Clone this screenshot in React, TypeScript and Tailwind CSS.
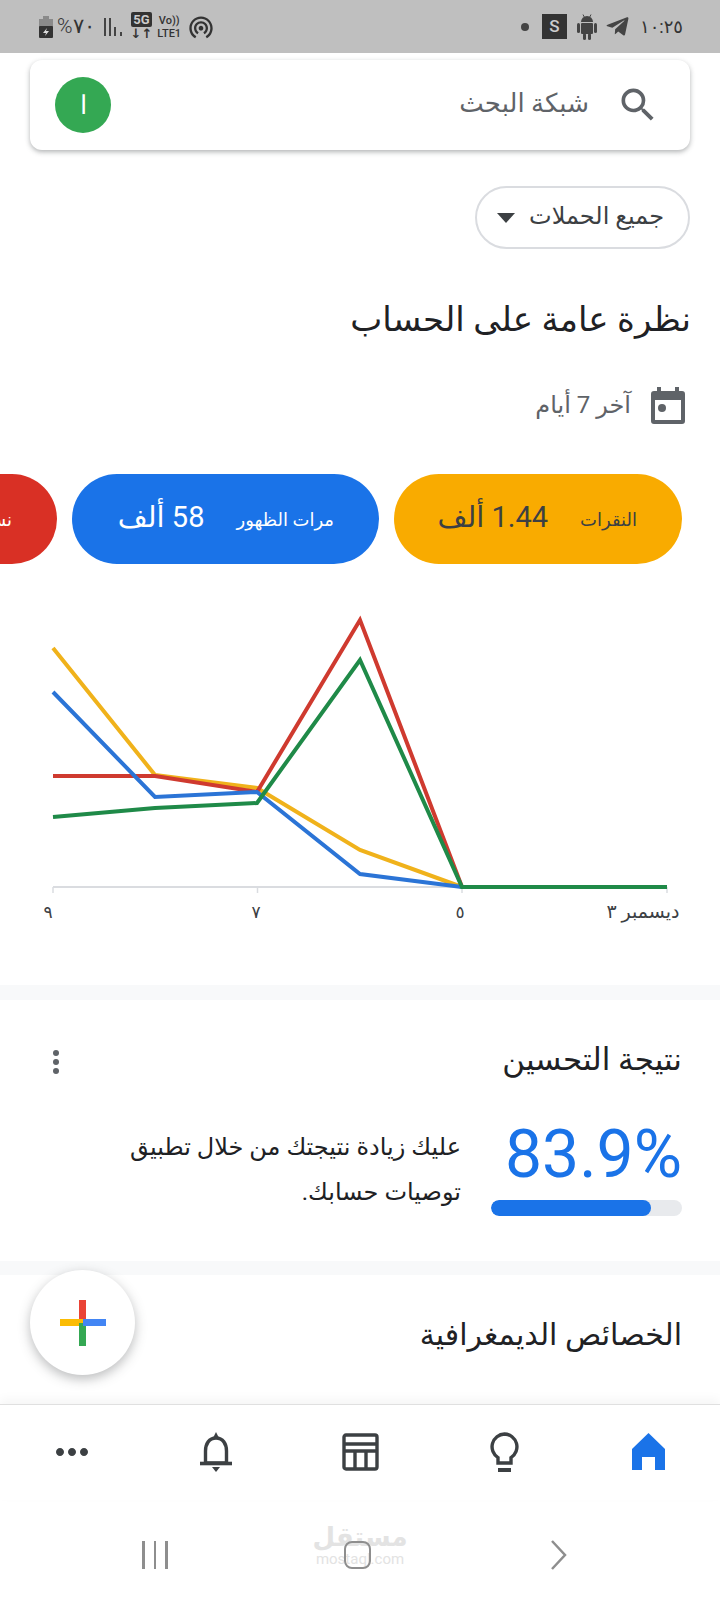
import React from 'react';
import { FaTelegramPlane } from 'react-icons/fa';
import { MdSearch, MdMoreHoriz, MdWifiTethering } from 'react-icons/md';

const FONT = "font-['Roboto','DejaVu_Sans',sans-serif]";

const SERIES = [
  { color: '#f0b21b', pts: '53,648 155,775 257,788 360,850 462,887' },
  { color: '#cf3a2f', pts: '53,776 155,776 257,792 360,620 462,887' },
  { color: '#2b74d6', pts: '53,692 155,797 257,792 360,874 462,887' },
  { color: '#1f8a48', pts: '53,817 155,808 257,803 360,660 462,887 667,887' },
];

const AndroidIcon = () => (
  <svg width="20" height="26" viewBox="0 0 20 26" fill="#444" className="ml-[10px]">
    <path d="M4 8 A6 6 0 0 1 16 8 Z" />
    <path d="M6 0.5 L7.5 3.5 M14 0.5 L12.5 3.5" stroke="#444" strokeWidth="1" />
    <rect x="4" y="9" width="12" height="11" rx="1" />
    <rect x="0" y="9" width="3" height="10" rx="1.5" />
    <rect x="17" y="9" width="3" height="10" rx="1.5" />
    <rect x="6" y="19" width="3" height="7" rx="1.5" />
    <rect x="11" y="19" width="3" height="7" rx="1.5" />
  </svg>
);

const StatusBar = () => (
  <div dir="ltr" className="h-[53px] shrink-0 bg-[#bfbfbf] flex items-center justify-between pl-[38px] pr-[40px] text-[#333]">
    <div className="flex items-center">
      <svg width="16" height="24" viewBox="0 0 16 24" className="mr-[3px]">
        <rect x="5" y="1" width="6" height="4" fill="#8a8a8a" />
        <rect x="1" y="4" width="14" height="8" fill="#8a8a8a" />
        <rect x="1" y="11" width="14" height="12" rx="1" fill="#333" />
        <path d="M9 13 L5 18 H8 L7 21 L11 16 H8 Z" fill="#ddd" />
      </svg>
      <span className="text-[21px] leading-none font-light">%٧٠</span>
      <svg width="20" height="18" viewBox="0 0 20 18" className="ml-[9px]">
        <rect x="0" y="0" width="2" height="18" fill="#444" />
        <rect x="5" y="0" width="2" height="18" fill="#444" />
        <rect x="10" y="9" width="2" height="9" fill="#444" />
        <rect x="16" y="14" width="2" height="4" fill="#444" />
      </svg>
      <div className="ml-[7px] flex flex-col items-center">
        <span className="bg-[#333] text-[#ccc] text-[13px] leading-[15px] font-bold px-[2px] rounded-[2px]">5G</span>
        <span className="text-[13px] leading-[14px] font-bold">↓↑</span>
      </div>
      <div className="ml-[5px] flex flex-col items-center text-[11px] leading-[13px] font-medium">
        <span>Vo))</span>
        <span>LTE1</span>
      </div>
      <MdWifiTethering className="ml-[6px] w-[28px] h-[28px]" />
    </div>
    <div className="flex items-center">
      <span className="w-[8px] h-[8px] rounded-full bg-[#444]" />
      <span className="ml-[13px] w-[25px] h-[25px] bg-[#333] text-[#ccc] flex items-center justify-center text-[17px] font-medium">S</span>
      <AndroidIcon />
      <FaTelegramPlane className="ml-[8px] w-[25px] h-[25px] text-[#444]" />
      <span className="ml-[10px] w-[40px] text-[18px] leading-none">١٠:٢٥</span>
    </div>
  </div>
);

const Pill = ({ label, value, bg, labelCls, valueCls, width }: { label: string; value: string; bg: string; labelCls: string; valueCls: string; width: string }) => (
  <div className={`${bg} ${width} h-[90px] shrink-0 rounded-full flex items-center pr-[45px] gap-[32px]`}>
    <span className={`text-[18px] whitespace-nowrap ${labelCls}`}>{label}</span>
    <span className={`text-[29px] pb-[3px] whitespace-nowrap ${valueCls}`}>{value}</span>
  </div>
);

const Chart = () => (
  <svg width="720" height="421" viewBox="0 564 720 421" className="block shrink-0">
    <line x1="53" y1="887" x2="667" y2="887" stroke="#dadce0" strokeWidth="2" />
    {[53, 257.5, 462, 667].map((x) => (
      <line key={x} x1={x} y1="887" x2={x} y2="893" stroke="#dadce0" strokeWidth="1.5" />
    ))}
    {SERIES.map((s) => (
      <polyline key={s.color} points={s.pts} fill="none" stroke={s.color} strokeWidth="4" strokeLinejoin="miter" />
    ))}
    <g fontSize="17" fill="#3c4043">
      <text x="48" y="918" textAnchor="middle">٩</text>
      <text x="256" y="918" textAnchor="middle">٧</text>
      <text x="460" y="918" textAnchor="middle">٥</text>
      <text x="643" y="918" textAnchor="middle" direction="rtl" fontSize="19">ديسمبر ٣</text>
    </g>
  </svg>
);

const HomeIcon = () => (
  <svg width="33" height="37" viewBox="0 0 33 37">
    <path d="M16.5 0 L33 16 V37 H23 V24 H10 V37 H0 V16 Z" fill="#1a73e8" />
  </svg>
);

const BulbIcon = () => (
  <svg width="29" height="40" viewBox="0 0 29 40" fill="none" stroke="#3c4043" strokeWidth="3.4">
    <path d="M14.5 2 A12.8 12.8 0 0 0 8 25.6 V31 H21 V25.6 A12.8 12.8 0 0 0 14.5 2 Z" />
    <path d="M8 38 H21" strokeWidth="4" />
  </svg>
);

const BellIcon = () => (
  <svg width="32" height="40" viewBox="0 0 32 40" fill="none" stroke="#3c4043" strokeWidth="3.4">
    <path d="M16 6 C9 6 5.5 12 5.5 19 V31 H26.5 V19 C26.5 12 23 6 16 6 Z" />
    <path d="M0 31.5 H32" strokeWidth="3.6" />
    <path d="M16 0 L19 6 H13 Z" fill="#3c4043" stroke="none" />
    <path d="M12 35 H20 L16 40 Z" fill="#3c4043" stroke="none" />
  </svg>
);

const TableIcon = () => (
  <svg width="37" height="38" viewBox="0 0 37 38" fill="none" stroke="#3c4043" strokeWidth="3.4">
    <rect x="2" y="2" width="33" height="34" rx="2" />
    <path d="M2 11 H35 M2 18 H35 M13 18 V36 M24 18 V36" />
  </svg>
);

export default function App() {
  return (
    <div dir="rtl" className={`${FONT} relative w-[720px] h-[1600px] overflow-hidden bg-white flex flex-col text-[#202124]`}>
      <StatusBar />

      <div className="mt-[7px] mx-[30px] h-[90px] shrink-0 rounded-[12px] bg-white shadow-[0_2px_5px_rgba(60,64,67,0.4)] flex items-center pr-[30px] pl-[25px]">
        <MdSearch className="w-[44px] h-[44px] text-[#5f6368]" />
        <span className="mr-[27px] text-[26px] leading-[36px] pb-[4px] text-[#5f6368]">شبكة البحث</span>
        <span className="mr-auto w-[56px] h-[56px] rounded-full bg-[#34a853] text-white flex items-center justify-center text-[26px] font-light">ا</span>
      </div>

      <div className="mt-[36px] mr-[30px] self-start w-[215px] h-[63px] shrink-0 rounded-full border-2 border-[#dadce0] flex items-center pr-[24px] text-[#3c4043]">
        <span className="text-[24px] pb-[4px] whitespace-nowrap">جميع الحملات</span>
        <svg width="18" height="10" viewBox="0 0 18 10" className="mr-auto ml-[20px]">
          <path d="M0 0 H18 L9 10 Z" fill="#3c4043" />
        </svg>
      </div>

      <h1 className="mt-[48px] mr-[29px] h-[48px] shrink-0 text-[34px] leading-[44px] font-normal">نظرة عامة على الحساب</h1>

      <div className="mt-[40px] mr-[35px] h-[40px] shrink-0 flex items-center text-[#5f6368]">
        <svg width="34" height="37" viewBox="0 0 34 37">
          <path d="M6 0 H10 V4 H24 V0 H28 V4 H31 A3 3 0 0 1 34 7 V34 A3 3 0 0 1 31 37 H3 A3 3 0 0 1 0 34 V7 A3 3 0 0 1 3 4 H6 Z M4 13 V33 H30 V13 Z" fill="#5f6368" fillRule="evenodd" />
          <circle cx="11" cy="21" r="4" fill="#5f6368" />
        </svg>
        <span className="mr-[20px] text-[24px]">آخر 7 أيام</span>
      </div>

      <div className="mt-[49px] h-[90px] shrink-0 flex gap-[15px] pr-[38px] overflow-hidden">
        <Pill label="النقرات" value="1.44 ألف" bg="bg-[#f9ab00]" labelCls="text-[#3c4043]" valueCls="text-[#3c4043]" width="w-[288px]" />
        <Pill label="مرات الظهور" value="58 ألف" bg="bg-[#1a73e8]" labelCls="text-white" valueCls="text-white" width="w-[307px]" />
        <Pill label="نسبة النقر" value="2.5%" bg="bg-[#d93025]" labelCls="text-white" valueCls="text-white" width="w-[288px]" />
      </div>

      <Chart />

      <div className="h-[15px] shrink-0 bg-[#f8f9fa]" />

      <section className="h-[261px] shrink-0 pt-[40px] pr-[38px] pl-[53px]">
        <div className="h-[40px] flex items-center justify-between">
          <h2 className="text-[31px] font-normal whitespace-nowrap">نتيجة التحسين</h2>
          <div className="flex flex-col gap-[3px] mt-[4px]">
            <span className="w-[6px] h-[6px] rounded-full bg-[#5f6368]" />
            <span className="w-[6px] h-[6px] rounded-full bg-[#5f6368]" />
            <span className="w-[6px] h-[6px] rounded-full bg-[#5f6368]" />
          </div>
        </div>
        <div className="mt-[42px] flex">
          <div className="w-[191px] shrink-0">
            <div dir="ltr" className="h-[64px] text-right text-[66px] leading-[66px] text-[#1a73e8]">83.9%</div>
            <div className="mt-[14px] h-[16px] rounded-full bg-[#e8eaed] overflow-hidden">
              <div className="w-[160px] h-full rounded-full bg-[#1a73e8] mr-auto" />
            </div>
          </div>
          <p className="mr-[30px] mt-[3px] w-[345px] text-[24px] leading-[45px]">عليك زيادة نتيجتك من خلال تطبيق توصيات حسابك.</p>
        </div>
      </section>

      <div className="h-[14px] shrink-0 bg-[#f8f9fa]" />

      <section className="flex-1 pt-[38px] pr-[38px]">
        <h2 className="text-[30px] leading-[44px] font-normal">الخصائص الديمغرافية</h2>
      </section>

      <nav className="h-[96px] shrink-0 grid grid-cols-5 items-center border-t border-[#e0e0e0] shadow-[0_-5px_10px_rgba(0,0,0,0.04)] pb-[2px]">
        <div className="flex justify-center"><HomeIcon /></div>
        <div className="flex justify-center"><BulbIcon /></div>
        <div className="flex justify-center"><TableIcon /></div>
        <div className="flex justify-center"><BellIcon /></div>
        <div className="flex justify-center"><MdMoreHoriz className="w-[48px] h-[48px] text-[#3c4043]" /></div>
      </nav>

      <div dir="ltr" className="relative h-[100px] shrink-0 flex items-center justify-center pr-[6px] pt-[10px]">
        <div className="absolute left-[316px] top-[24px] w-[88px] flex flex-col items-center text-[#e3e3e3] font-bold leading-none">
          <span className="text-[26px]">مستقل</span>
          <span className="text-[15px] font-normal mt-[2px]">mostaql.com</span>
        </div>
        <div className="w-[202px] flex justify-center gap-[9px]">
          <span className="w-[2.5px] h-[28px] bg-[#8e8e8e]" />
          <span className="w-[2.5px] h-[28px] bg-[#8e8e8e]" />
          <span className="w-[2.5px] h-[28px] bg-[#8e8e8e]" />
        </div>
        <div className="relative w-[202px] flex justify-center">
          <span className="w-[27px] h-[28px] rounded-[8px] border-[2.5px] border-[#8e8e8e]" />
        </div>
        <div className="w-[202px] flex justify-center">
          <svg width="18" height="30" viewBox="0 0 18 30" fill="none" stroke="#8e8e8e" strokeWidth="2.5">
            <path d="M2 1 L15 15 L2 29" />
          </svg>
        </div>
      </div>

      {/* FAB sits over the page */}
      <div className="absolute left-[30px] top-[1270px] w-[105px] h-[105px] rounded-full bg-white shadow-[0_4px_12px_rgba(60,64,67,0.35)] flex items-center justify-center">
        <svg width="46" height="46" viewBox="0 0 46 46">
          <rect x="19" y="0" width="7" height="23" fill="#ea4335" />
          <rect x="0" y="19" width="23" height="7" fill="#fbbc04" />
          <rect x="19" y="23" width="7" height="23" fill="#34a853" />
          <rect x="23" y="19" width="23" height="7" fill="#4285f4" />
        </svg>
      </div>
    </div>
  );
}
